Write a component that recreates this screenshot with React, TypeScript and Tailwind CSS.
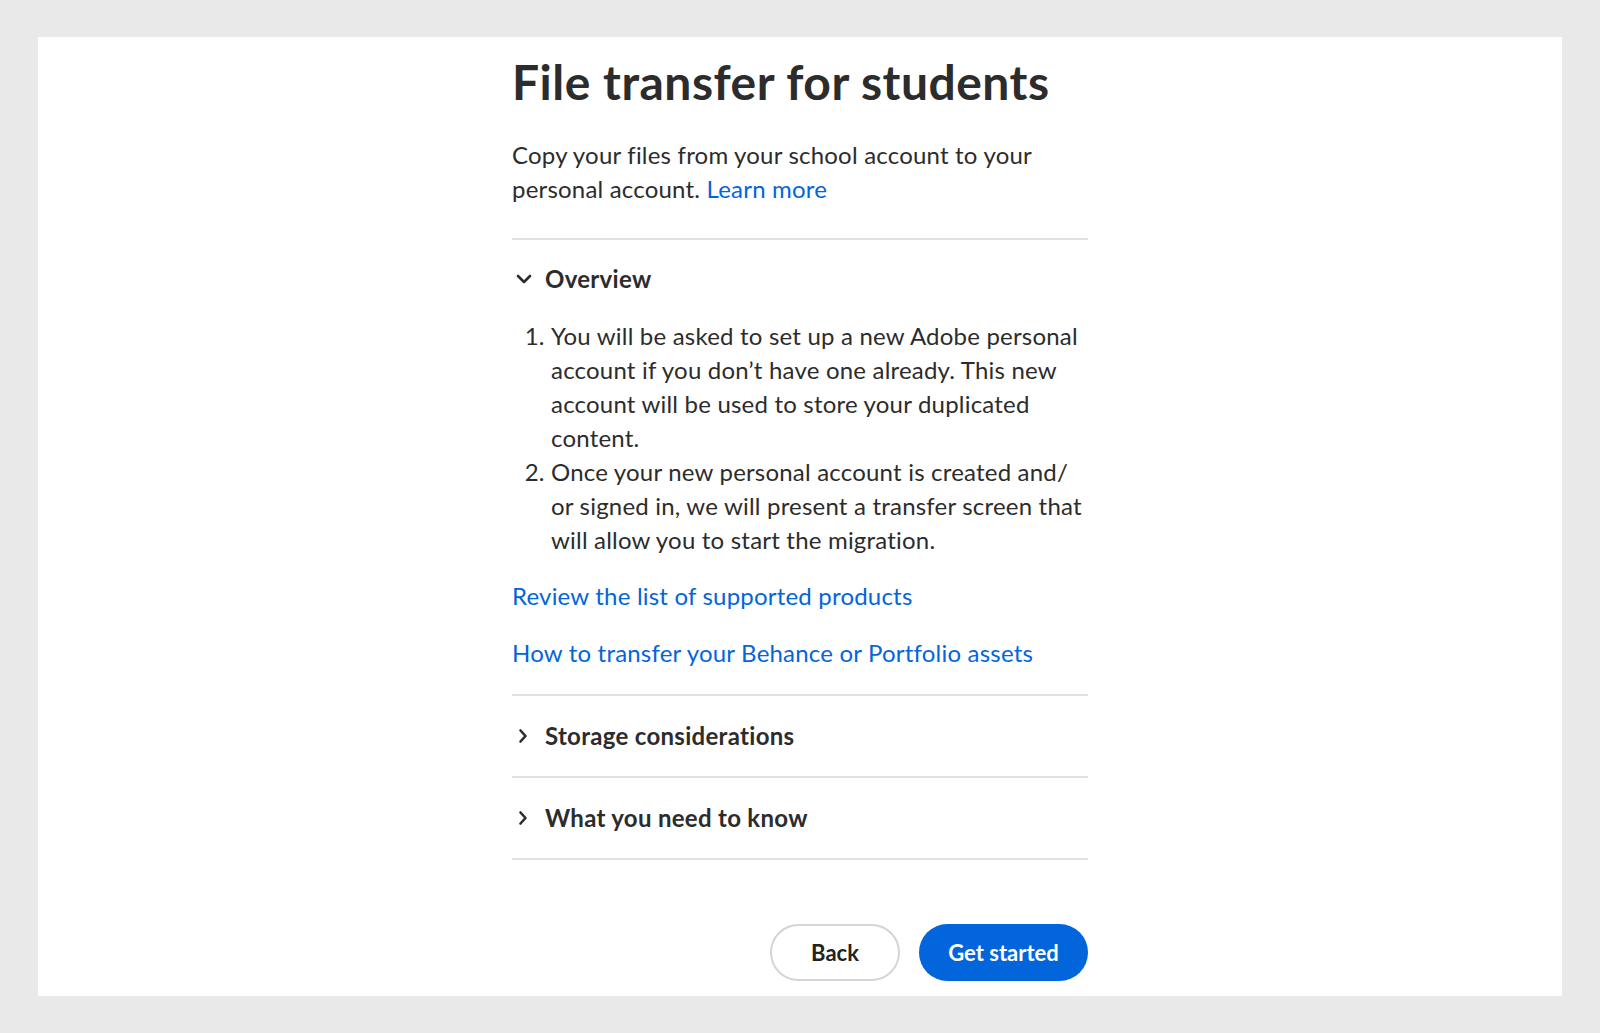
import { useState } from 'react'

const font = { fontFamily: 'Lato, "Noto Sans", sans-serif' }

function ChevronDown() {
  return (
    <svg width="16" height="10" viewBox="0 0 16 10" fill="none">
      <path d="M2 2l6 6 6-6" stroke="#2c2c2c" strokeWidth="2.6" strokeLinecap="round" strokeLinejoin="round" />
    </svg>
  )
}

function ChevronRight() {
  return (
    <svg width="10" height="16" viewBox="0 0 10 16" fill="none">
      <path d="M2.5 2.5l5 5.5-5 5.5" stroke="#2c2c2c" strokeWidth="2.6" strokeLinecap="round" strokeLinejoin="round" />
    </svg>
  )
}

function Section({ title, open, onToggle, children }: { title: string; open: boolean; onToggle: () => void; children?: React.ReactNode }) {
  return (
    <div className="border-b-2 border-[#e1e1e1]">
      <button
        className={`flex w-full items-center text-left ${open ? 'pt-[24px]' : 'h-[80px]'}`}
        onClick={onToggle}
      >
        <span className={`flex w-[33px] ${open ? 'pl-[4px]' : 'pl-[6px]'}`}>{open ? <ChevronDown /> : <ChevronRight />}</span>
        <span className="text-[24px] font-bold leading-[30px] tracking-[0.3px] text-[#2c2c2c]">{title}</span>
      </button>
      {open && children}
    </div>
  )
}

export default function App() {
  const [open, setOpen] = useState<string>('overview')
  const toggle = (k: string) => setOpen(open === k ? '' : k)

  return (
    <div className="min-h-[1033px] bg-[#e9e9e9] px-[38px] py-[37px]" style={font}>
      <div className="h-[959px] bg-white pt-[16px]">
        <div className="mx-auto w-[576px] text-[#2c2c2c]">
          <h1 className="text-[48px] font-bold leading-[58px] tracking-[0.5px]">File transfer for students</h1>
          <p className="mt-[27px] text-[24px] leading-[34px] tracking-[0.2px]">
            Copy your files from your school account to your personal account. <a href="#" className="text-[#0265dc]">Learn more</a>
          </p>

          <div className="mt-[32px] border-t-2 border-[#e1e1e1]">
            <Section title="Overview" open={open === 'overview'} onToggle={() => toggle('overview')}>
              <ol className="mt-[25px] list-decimal pl-[39px] text-[24px] leading-[34px] tracking-[0.2px]">
                <li>You will be asked to set up a new Adobe personal account if you don’t have one already. This new account will be used to store your duplicated content.</li>
                <li>Once your new personal account is created and/ or signed in, we will present a transfer screen that will allow you to start the migration.</li>
              </ol>
              <div className="mt-[22px] flex flex-col gap-[23px] pb-[24px] text-[24px] leading-[34px] tracking-[0.2px] text-[#0265dc]">
                <a href="#">Review the list of supported products</a>
                <a href="#">How to transfer your Behance or Portfolio assets</a>
              </div>
            </Section>
            <Section title="Storage considerations" open={open === 'storage'} onToggle={() => toggle('storage')} />
            <Section title="What you need to know" open={open === 'know'} onToggle={() => toggle('know')} />
          </div>

          <div className="mt-[64px] flex justify-end gap-[19px]">
            <button className="h-[57px] w-[130px] rounded-full border-2 border-[#d5d5d5] text-[22px] font-bold text-[#222]">Back</button>
            <button className="h-[57px] w-[169px] rounded-full bg-[#0265dc] text-[22px] font-bold text-white">Get started</button>
          </div>
        </div>
      </div>
    </div>
  )
}
